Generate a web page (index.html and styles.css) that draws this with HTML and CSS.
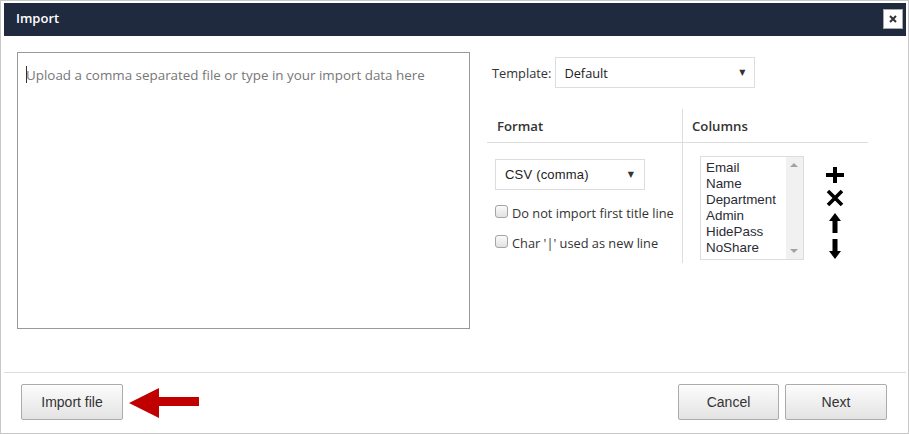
FILE: index.html
```html
<!DOCTYPE html>
<html>
<head>
<meta charset="utf-8">
<title>Import</title>
<link rel="stylesheet" href="styles.css">
</head>
<body>
<div class="dialog">
  <div class="header">
    <span class="title">Import</span>
    <span class="close"><svg width="8" height="8" viewBox="0 0 8 8"><path d="M1 1L7 7M7 1L1 7" stroke="#333" stroke-width="2"/></svg></span>
  </div>
  <div class="body">
    <div class="textarea"><span class="caret"></span><span class="placeholder">Upload a comma separated file or type in your import data here</span></div>
    <div class="side">
      <div class="template-row">
        <span class="label">Template:</span>
        <div class="select template-select"><span>Default</span><span class="tri">▼</span></div>
      </div>
      <div class="table">
        <div class="th">Format</div>
        <div class="th th-cols">Columns</div>
        <div class="td">
          <div class="select format-select"><span>CSV (comma)</span><span class="tri">▼</span></div>
          <label class="check"><span class="box"></span>Do not import first title line</label>
          <label class="check"><span class="box"></span>Char '|' used as new line</label>
        </div>
        <div class="td td-cols">
          <div class="listbox">
            <div class="items">
              <div>Email</div><div>Name</div><div>Department</div><div>Admin</div><div>HidePass</div><div>NoShare</div>
            </div>
            <div class="scroll"><span class="up"></span><span class="down"></span></div>
          </div>
          <div class="tools">
            <svg width="18" height="16" viewBox="0 0 18 16"><path d="M7 0h4v6h7v4h-7v6H7v-6H0V6h7z" fill="#000"/></svg>
            <svg width="18" height="18" viewBox="0 0 18 18"><path d="M2 2L16 16M16 2L2 16" stroke="#000" stroke-width="3.6"/></svg>
            <svg width="12" height="20" viewBox="0 0 12 20"><path d="M6 0L12 8H8.5V20h-5V8H0z" fill="#000"/></svg>
            <svg width="12" height="20" viewBox="0 0 12 20"><path d="M6 20L12 12H8.5V0h-5V12H0z" fill="#000"/></svg>
          </div>
        </div>
      </div>
    </div>
  </div>
  <div class="footer">
    <div class="left">
      <button class="btn">Import file</button>
      <svg class="arrow" width="70" height="30" viewBox="0 0 70 30"><path d="M0 15L30 0V9H70V18H30V30z" fill="#c00000"/></svg>
    </div>
    <div class="right">
      <button class="btn cancel">Cancel</button>
      <button class="btn">Next</button>
    </div>
  </div>
</div>
</body>
</html>
```
FILE: styles.css
```css
html, body {
  margin: 0;
  padding: 0;
  background: #fff;
}
.dialog {
  width: 909px;
  height: 434px;
  box-sizing: border-box;
  border: 1px solid #c8c8c8;
  padding: 2px 2px 0 3px;
  display: flex;
  flex-direction: column;
  font-family: "Open Sans", sans-serif;
  color: #333;
}
.header {
  height: 33px;
  background: #1f2a3e;
  display: flex;
  align-items: center;
  justify-content: space-between;
  padding: 0 3px 0 12px;
  flex: none;
}
.title {
  color: #fff;
  font-weight: 600;
  font-size: 13px;
  margin-top: -3px;
}
.close {
  width: 18px;
  height: 18px;
  background: #fff;
  border: 1px solid #a8a8a8;
  display: flex;
  align-items: center;
  justify-content: center;
  margin-top: -1px;
}
.body {
  flex: 1;
  display: flex;
  padding: 16px 0 0 13px;
}
.textarea {
  border: 1px solid #999;
  padding: 12px 7px;
  box-sizing: content-box;
  width: 437px;
  height: 251px;
  position: relative;
  font-size: 13.4px;
}
.caret {
  position: absolute;
  left: 8px;
  top: 13px;
  width: 1px;
  height: 17px;
  background: #333;
}
.placeholder {
  color: #777;
  line-height: 20px;
  padding-left: 1px;
}
.side {
  margin-left: 17px;
  width: 381px;
}
.template-row {
  display: flex;
  align-items: center;
  margin-top: 5px;
  padding-left: 5px;
}
.label {
  font-size: 12.8px;
  margin-right: 4px;
}
.select {
  height: 31px;
  box-sizing: border-box;
  border: 1px solid #ddd;
  display: flex;
  align-items: center;
  justify-content: space-between;
  padding: 0 9px 0 8px;
  font-size: 12.8px;
  color: #222;
  background: #fff;
}
.tri {
  font-size: 8px;
  color: #333;
  font-family: "DejaVu Sans", sans-serif;
}
.template-select {
  width: 200px;
}
.table {
  margin-top: 21px;
  display: grid;
  grid-template-columns: 195px 186px;
  grid-template-rows: 34px 120px;
}
.th {
  border-bottom: 1px solid #ddd;
  font-weight: 600;
  font-size: 13.2px;
  display: flex;
  align-items: center;
  padding-left: 10px;
}
.th-cols {
  border-left: 1px solid #ddd;
  padding-left: 9px;
}
.td {
  padding: 16px 0 0 8px;
}
.td-cols {
  border-left: 1px solid #ddd;
  padding: 13px 0 0 17px;
  display: flex;
}
.format-select {
  width: 150px;
  font-family: "Liberation Sans", Arial, sans-serif;
  font-size: 13px;
  letter-spacing: 0.2px;
  padding-left: 9px;
  padding-right: 10px;
}
.check {
  display: flex;
  align-items: center;
  font-size: 12.8px;
  margin-top: 12px;
  height: 21px;
}
.check + .check {
  margin-top: 9px;
}
.box {
  width: 11px;
  height: 11px;
  border: 1px solid #a4a4a4;
  border-radius: 3px;
  background: linear-gradient(#fafafa, #e2e2e2);
  margin-right: 4px;
  margin-top: -2px;
}
.listbox {
  width: 104px;
  height: 104px;
  box-sizing: border-box;
  border: 1px solid #ddd;
  display: flex;
}
.items {
  flex: 1;
  padding: 3px 0 0 5px;
  font-family: "Liberation Sans", Arial, sans-serif;
  font-size: 13.4px;
  line-height: 16px;
  color: #2b2b35;
}
.scroll {
  width: 17px;
  background: #f1f1f1;
  position: relative;
}
.up, .down {
  position: absolute;
  left: 4px;
  width: 0;
  height: 0;
  border-left: 4px solid transparent;
  border-right: 4px solid transparent;
}
.up {
  top: 6px;
  border-bottom: 4px solid #a3a3a3;
}
.down {
  bottom: 6px;
  border-top: 4px solid #a3a3a3;
}
.tools {
  display: flex;
  flex-direction: column;
  align-items: center;
  width: 18px;
  margin-left: 22px;
  padding-top: 11px;
  gap: 6px;
}
.footer {
  flex: none;
  border-top: 1px solid #ddd;
  padding: 11px 19px 13px 17px;
  display: flex;
  justify-content: space-between;
  align-items: center;
}
.left, .right {
  display: flex;
  align-items: center;
}
.right {
  gap: 6px;
}
.btn {
  width: 102px;
  height: 36px;
  border: 1px solid #ababab;
  border-radius: 2px;
  background: linear-gradient(#fcfcfc, #e3e3e3);
  font-family: "Liberation Sans", Arial, sans-serif;
  font-size: 14px;
  color: #333;
  padding: 0;
}
.cancel {
  width: 101px;
}
.arrow {
  margin-left: 6px;
  margin-top: 1px;
}
```
